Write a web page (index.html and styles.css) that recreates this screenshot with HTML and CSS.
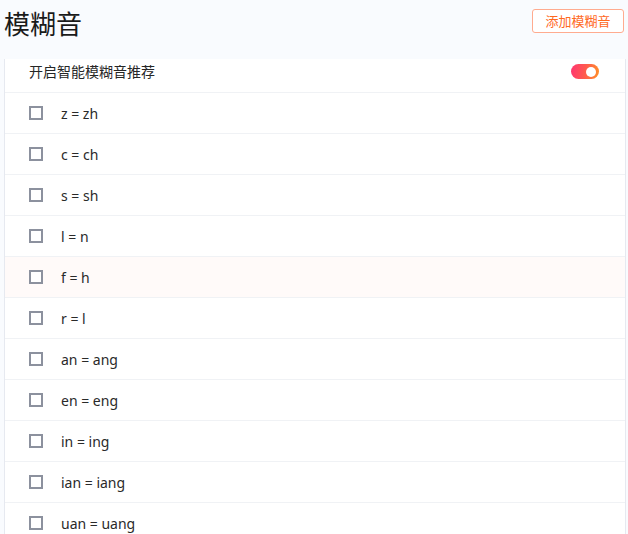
FILE: index.html
```html
<!DOCTYPE html>
<html lang="zh">
<head>
<meta charset="utf-8">
<link rel="stylesheet" href="styles.css">
</head>
<body>
<div class="page">
  <header class="header">
    <h1 class="title">模糊音</h1>
    <button class="add-btn">添加模糊音</button>
  </header>
  <section class="card">
    <div class="row row-head">
      <span class="head-label">开启智能模糊音推荐</span>
      <span class="toggle"><span class="knob"></span></span>
    </div>
    <div class="row"><span class="cb"></span><span class="label">z = zh</span></div>
    <div class="row"><span class="cb"></span><span class="label">c = ch</span></div>
    <div class="row"><span class="cb"></span><span class="label">s = sh</span></div>
    <div class="row"><span class="cb"></span><span class="label">l = n</span></div>
    <div class="row row-hover"><span class="cb"></span><span class="label">f = h</span></div>
    <div class="row"><span class="cb"></span><span class="label">r = l</span></div>
    <div class="row"><span class="cb"></span><span class="label">an = ang</span></div>
    <div class="row"><span class="cb"></span><span class="label">en = eng</span></div>
    <div class="row"><span class="cb"></span><span class="label">in = ing</span></div>
    <div class="row"><span class="cb"></span><span class="label">ian = iang</span></div>
    <div class="row"><span class="cb"></span><span class="label">uan = uang</span></div>
  </section>
</div>
</body>
</html>
```
FILE: styles.css
```css
html, body {
  margin: 0;
  padding: 0;
  background: #f9fbfe;
  overflow: hidden;
}
body {
  font-family: "Noto Sans CJK SC", "Noto Sans", sans-serif;
  color: #333;
}
.page {
  width: 628px;
  height: 534px;
  overflow: hidden;
}
.header {
  height: 59px;
  display: flex;
  justify-content: space-between;
  align-items: flex-start;
  padding: 0 4px 0 4px;
  box-sizing: border-box;
}
.title {
  margin: 6px 0 0 0;
  font-size: 26px;
  font-weight: 400;
  line-height: 34px;
  color: #1a1a1a;
}
.add-btn {
  margin-top: 9px;
  width: 92px;
  height: 24px;
  padding: 0;
  border: 1px solid #ffab8f;
  border-radius: 3px;
  background: #fff;
  color: #ff6a1f;
  font-family: "Noto Sans CJK SC", sans-serif;
  font-size: 13px;
  line-height: 20px;
}
.card {
  margin-left: 4px;
  width: 622px;
  height: 500px;
  box-sizing: border-box;
  background: #fff;
  border-left: 1px solid #e6e9f0;
  border-right: 1px solid #e6e9f0;
}
.row {
  height: 41px;
  box-sizing: border-box;
  border-bottom: 1px solid #f0f2f5;
  display: flex;
  align-items: center;
  padding-left: 24px;
}
.row-head {
  height: 34px;
  padding-right: 24px;
  justify-content: space-between;
}
.row-hover {
  background: #fffaf9;
}
.head-label {
  font-size: 14px;
  color: #262626;
  line-height: 20px;
  margin-top: -10px;
}
.toggle {
  width: 28px;
  height: 15px;
  border-radius: 8px;
  background: linear-gradient(100deg, #ff3471 0%, #ff5a4e 50%, #ff9226 100%);
  display: flex;
  align-items: center;
  justify-content: flex-end;
  padding-right: 3px;
  box-sizing: border-box;
  margin-top: -8px;
  margin-right: 2px;
}
.knob {
  width: 10px;
  height: 10px;
  border-radius: 50%;
  background: #fff;
}
.cb {
  width: 14px;
  height: 14px;
  box-sizing: border-box;
  border: 2px solid #8c919e;
  background: #fff;
  margin-right: 18px;
  margin-top: 0;
}
.label {
  font-family: "Noto Sans", "Noto Sans CJK SC", sans-serif;
  font-size: 14px;
  color: #2a2a2a;
  line-height: 20px;
  margin-top: 1px;
}
```
